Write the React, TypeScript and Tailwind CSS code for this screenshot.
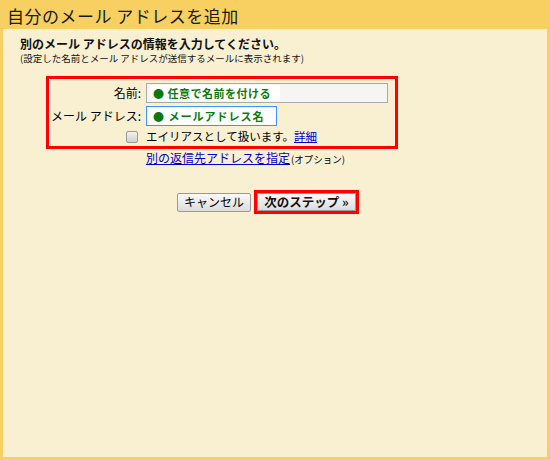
const jp = { fontFamily: '"Noto Sans CJK JP", "Noto Sans", sans-serif' };

export default function App() {
  return (
    <div
      className="w-[550px] h-[460px] bg-[#f8d062] px-[3px] pb-[3px] flex flex-col text-black"
      style={jp}
    >
      {/* Header */}
      <div className="h-[29px] flex items-center pl-[4px] pt-[1px]">
        <h1 className="text-[17px] leading-none text-[#1a1a1a] tracking-[0.5px]">自分のメール アドレスを追加</h1>
      </div>

      {/* Body */}
      <div className="flex-1 bg-[#f9efd1] flex flex-col">
        <div className="pl-[17px] pt-[7px]">
          <p className="text-[12px] leading-[15px] font-bold text-[#111]">
            別のメール アドレスの情報を入力してください。
          </p>
          <p className="mt-[1px] text-[9.5px] leading-[12px] text-[#111]">
            (設定した名前とメール アドレスが送信するメールに表示されます)
          </p>
        </div>

        {/* Highlighted form */}
        <div className="ml-[43px] mt-[12px] w-[352px] h-[73px] border-[3px] border-[#ff0000] flex flex-col pt-[4px] gap-[3px]">
          <div className="flex items-center">
            <span className="w-[92px] text-right text-[12px] leading-none">名前:</span>
            <div className="ml-[5px] w-[242px] h-[20px] border border-[#a9a9a9] bg-[#f5f5f3] flex items-center pl-[3px]">
              <span className="bg-white h-[16px] w-[130px] flex items-center pl-[3px] text-[11px] font-bold text-[#0a7a0a] tracking-[0.5px] leading-none">
                ● 任意で名前を付ける
              </span>
            </div>
          </div>
          <div className="flex items-center">
            <span className="w-[92px] text-right text-[12px] leading-none">メール アドレス:</span>
            <div className="ml-[5px] w-[131px] h-[20px] border border-[#3399ff] bg-white flex items-center pl-[6px]">
              <span className="text-[11px] font-bold text-[#0a7a0a] tracking-[1px] leading-none">
                ● メールアドレス名
              </span>
            </div>
          </div>
          <div className="flex items-center mt-[2px] pl-[77px]">
            <span className="w-[12px] h-[12px] rounded-[2px] border border-[#9a9a9a] bg-gradient-to-b from-[#f2f2f2] to-[#cfcfcf]" />
            <span className="ml-[8px] text-[11.5px] leading-none">
              エイリアスとして扱います。
              <a className="text-[#0000cc] underline">詳細</a>
            </span>
          </div>
        </div>

        <div className="pl-[143px] mt-[2px] flex items-baseline">
          <a className="text-[12px] leading-[14px] text-[#0000cc] underline">別の返信先アドレスを指定</a>
          <span className="text-[9.5px] leading-none ml-[1px]">(オプション)</span>
        </div>

        {/* Buttons */}
        <div className="flex items-center pl-[174px] mt-[25px] gap-[3px]">
          <button className="w-[74px] h-[19px] border border-[#999] rounded-[2px] bg-gradient-to-b from-[#fafafa] to-[#dcdcdc] text-[12px] leading-none">
            キャンセル
          </button>
          <div className="border-[3px] border-[#ff0000] w-[105px] h-[24px] flex">
            <button className="flex-1 border border-[#999] bg-gradient-to-b from-[#fafafa] to-[#dcdcdc] text-[12.5px] font-bold leading-none text-[#111]">
              次のステップ »
            </button>
          </div>
        </div>
      </div>
    </div>
  );
}
